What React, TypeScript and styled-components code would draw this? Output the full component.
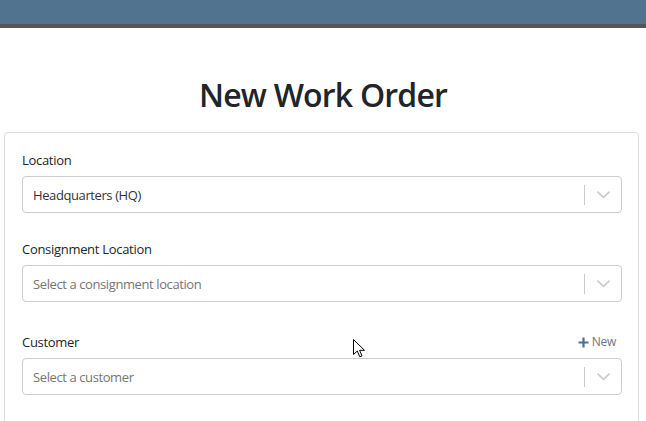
import * as React from "react";
import styled, { createGlobalStyle } from "styled-components";

const GlobalStyle = createGlobalStyle`
  html, body {
    margin: 0;
    padding: 0;
    background: #fff;
    font-family: "Open Sans", "Noto Sans", sans-serif;
    color: #212529;
  }
`;

interface Field {
  label: string;
  value?: string;
  placeholder: string;
  canAdd?: boolean;
}

const fields: Field[] = [
  { label: "Location", value: "Headquarters (HQ)", placeholder: "Select a location" },
  { label: "Consignment Location", placeholder: "Select a consignment location" },
  { label: "Customer", placeholder: "Select a customer", canAdd: true },
];

const Chevron = () => (
  <svg width="13" height="8" viewBox="0 0 13 8">
    <path
      d="M1 1.2 L6.5 6.4 L12 1.2"
      fill="none"
      stroke="#cccccc"
      strokeWidth="1.8"
      strokeLinecap="round"
      strokeLinejoin="round"
    />
  </svg>
);

const PlusIcon = () => (
  <svg width="11" height="11" viewBox="0 0 11 11">
    <path d="M5.5 0.5 V10.5 M0.5 5.5 H10.5" stroke="#4f6f8c" strokeWidth="2.2" />
  </svg>
);

const Cursor = () => (
  <svg width="14" height="21" viewBox="0 0 14 21">
    <path
      d="M0.5 0.5 L0.5 15.5 L4.3 12 L6.8 17.8 L9 16.9 L6.6 11.3 L11.5 11.3 Z"
      fill="#fff"
      stroke="#000"
      strokeWidth="1"
      strokeLinejoin="miter"
    />
  </svg>
);

export default function App() {
  return (
    <React.Fragment>
      <GlobalStyle />
      <Page>
        <TopBar />
        <Title>New Work Order</Title>
        <Card>
          {fields.map((f) => (
            <Group key={f.label}>
              <LabelRow tall={!!f.canAdd}>
                <Label>{f.label}</Label>
                {f.canAdd && (
                  <NewLink>
                    <PlusIcon />
                    New
                  </NewLink>
                )}
              </LabelRow>
              <SelectBox>
                <SelectValue muted={!f.value}>{f.value || f.placeholder}</SelectValue>
                <Indicators>
                  <Separator />
                  <DropIcon>
                    <Chevron />
                  </DropIcon>
                </Indicators>
              </SelectBox>
            </Group>
          ))}
        </Card>
        <CursorSpot>
          <Cursor />
        </CursorSpot>
      </Page>
    </React.Fragment>
  );
}

const Page = styled.div`
  position: relative;
  width: 646px;
  height: 421px;
  overflow: hidden;
`;

const TopBar = styled.div`
  height: 24px;
  background: #52738f;
  border-bottom: 4px solid #555555;
`;

const Title = styled.h1`
  margin: 0;
  padding-top: 43px;
  height: 61px;
  text-align: center;
  font-size: 32px;
  font-weight: 600;
  line-height: 48px;
  color: #212529;
  letter-spacing: -0.8px;
`;

const Card = styled.div`
  margin: 0 7px 0 4px;
  border: 1px solid #dddddd;
  border-radius: 4px;
  padding: 17px 16px 60px 17px;
  display: flex;
  flex-direction: column;
  gap: 26px;
`;

const Group = styled.div`
  display: flex;
  flex-direction: column;
`;

const LabelRow = styled.div<{ tall: boolean }>`
  display: flex;
  justify-content: space-between;
  align-items: flex-end;
  height: ${(p) => (p.tall ? "24px" : "20px")};
  margin-bottom: 6px;
`;

const Label = styled.label`
  font-size: 13px;
  line-height: 20px;
  letter-spacing: -0.3px;
  color: #212529;
`;

const NewLink = styled.span`
  font-size: 12px;
  line-height: 20px;
  color: #6c757d;
  margin-right: 6px;
  display: flex;
  align-items: center;
  gap: 3px;
  letter-spacing: -0.3px;
  height: 20px;
`;

const SelectBox = styled.div`
  box-sizing: border-box;
  height: 37px;
  border: 1px solid #cccccc;
  border-radius: 4px;
  display: flex;
  align-items: center;
  justify-content: space-between;
  background: #fff;
`;

const SelectValue = styled.span<{ muted: boolean }>`
  padding-left: 10px;
  font-size: 13px;
  letter-spacing: -0.4px;
  color: ${(p) => (p.muted ? "#757575" : "#333333")};
`;

const Indicators = styled.div`
  display: flex;
  align-items: center;
  height: 100%;
`;

const Separator = styled.span`
  width: 1px;
  height: 20px;
  background: #cccccc;
`;

const DropIcon = styled.div`
  display: flex;
  padding: 1px 11px 0 12px;
`;

const CursorSpot = styled.div`
  position: absolute;
  left: 353px;
  top: 339px;
`;
